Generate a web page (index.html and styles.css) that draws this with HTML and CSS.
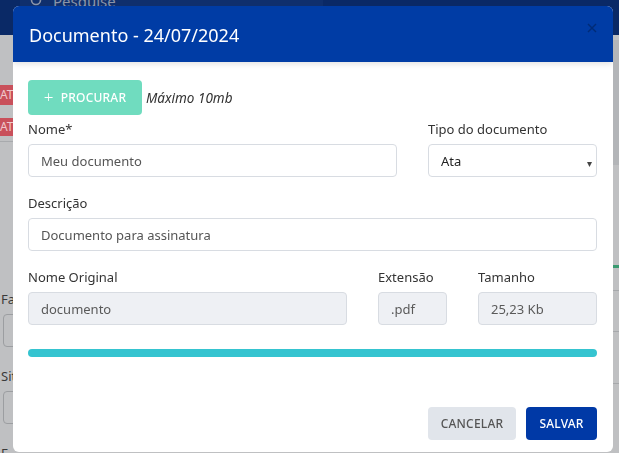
FILE: index.html
```html
<!DOCTYPE html>
<html lang="pt-BR">
<head>
<meta charset="utf-8">
<title>Documento</title>
<link rel="stylesheet" href="styles.css">
</head>
<body>
<div class="page">
  <div class="topbar">
    <div class="search">
      <svg class="search-icon" width="14" height="14" viewBox="0 0 14 14"><circle cx="6" cy="6" r="4.5" fill="none" stroke="#8a94a8" stroke-width="1.6"/></svg>
      <span class="search-text">Pesquise</span>
    </div>
  </div>
  <div class="content">
    <div class="side">
      <div class="badge b1">ATI</div>
      <div class="badge b2">AT</div>
      <div class="sep"></div>
      <div class="bg-label l1">Fa</div>
      <div class="bg-input"></div>
      <div class="bg-label l2">Sit</div>
      <div class="bg-input"></div>
      <div class="bg-label l3">E-</div>
    </div>
    <div class="right-strip">
      <div class="rs-dark"></div>
      <div class="rs-green"></div>
      <div class="rs-line r1"></div>
      <div class="rs-line r2"></div>
      <div class="rs-line r3"></div>
    </div>
  </div>
</div>

<div class="modal">
  <div class="modal-header">
    <h1 class="modal-title">Documento - 24/07/2024</h1>
    <svg class="close" width="10" height="10" viewBox="0 0 10 10"><path d="M1 1L9 9M9 1L1 9" stroke="rgba(0,0,0,0.28)" stroke-width="1.5"/></svg>
  </div>
  <div class="modal-body">
    <div class="upload-row">
      <button class="btn btn-upload"><span class="plus">+</span>PROCURAR</button>
      <span class="max">Máximo 10mb</span>
    </div>
    <div class="row">
      <div class="group g-nome">
        <label class="label">Nome*</label>
        <div class="input">Meu documento</div>
      </div>
      <div class="group g-tipo">
        <label class="label">Tipo do documento</label>
        <div class="input select">Ata<span class="caret">▾</span></div>
      </div>
    </div>
    <div class="row">
      <div class="group g-full">
        <label class="label">Descrição</label>
        <div class="input">Documento para assinatura</div>
      </div>
    </div>
    <div class="row">
      <div class="group g-orig">
        <label class="label">Nome Original</label>
        <div class="input disabled">documento</div>
      </div>
      <div class="group g-ext">
        <label class="label">Extensão</label>
        <div class="input disabled">.pdf</div>
      </div>
      <div class="group g-tam">
        <label class="label">Tamanho</label>
        <div class="input disabled">25,23 Kb</div>
      </div>
    </div>
    <div class="progress"></div>
    <div class="footer">
      <button class="btn btn-cancel">CANCELAR</button>
      <button class="btn btn-save">SALVAR</button>
    </div>
  </div>
</div>
</body>
</html>
```

FILE: styles.css
```css
* { box-sizing: border-box; }
html, body { margin: 0; padding: 0; }
body {
  font-family: "Noto Sans", "Open Sans", sans-serif;
  width: 619px;
  height: 453px;
  overflow: hidden;
  background: #bfc0c2;
}
.page { width: 619px; height: 453px; }
.topbar {
  height: 35px;
  background: #0a2966;
  display: flex;
  align-items: flex-start;
  padding-left: 20px;
}
.search {
  display: flex;
  align-items: flex-start;
  gap: 9px;
  width: 303px;
  height: 26px;
  padding-left: 10px;
  background: #0f2f6d;
}
.search-icon { margin-top: -6px; }
.search-text { color: #8a94a8; font-size: 15px; line-height: 20px; margin-top: -9px; }
.content { display: flex; justify-content: space-between; height: 418px; }
.side { width: 13px; overflow: hidden; padding-top: 50px; }
.badge {
  background: #c9505b;
  color: #f0c8cc;
  font-size: 12px;
  line-height: 20px;
  height: 20px;
  white-space: nowrap;
}
.b2 { margin-top: 13px; height: 18px; line-height: 18px; }
.sep { height: 1px; background: #a8aaad; margin-top: 5px; }
.bg-label { color: #3a3a3a; font-size: 13px; line-height: 18px; padding-left: 1px; white-space: nowrap; }
.l1 { margin-top: 148px; }
.l2 { margin-top: 20px; }
.l3 { margin-top: 20px; }
.bg-input {
  margin-top: 6px;
  margin-left: 3px;
  width: 30px;
  height: 33px;
  border: 1px solid #9c9ea1;
  border-radius: 4px;
}
.right-strip { width: 6px; }
.rs-dark { height: 125px; background: #b3b5b8; margin-top: 5px; }
.rs-green { height: 3px; background: #3a9a70; margin-top: 100px; }
.rs-line { height: 1px; background: #a6a8ab; }
.r1 { margin-top: 22px; }
.r2 { margin-top: 40px; }
.r3 { margin-top: 51px; }

.modal {
  position: fixed;
  left: 13px;
  top: 6px;
  width: 600px;
  height: 446px;
  background: #fff;
  border-radius: 6px;
  overflow: hidden;
  display: flex;
  flex-direction: column;
}
.modal-header {
  height: 56px;
  flex: none;
  background: #003ca5;
  display: flex;
  align-items: center;
  justify-content: space-between;
  padding: 0 16px 0 16px;
  box-shadow: 0 2px 6px rgba(0,0,0,0.12);
  position: relative;
  z-index: 1;
}
.modal-title {
  margin: 0;
  color: #fff;
  font-weight: 400;
  font-size: 18px;
  line-height: 26px;
  margin-top: 1px;
}
.close { margin-top: -12px; }
.modal-body { padding: 18px 16px 0 15px; }
.upload-row { display: flex; align-items: center; gap: 4px; }
.btn {
  font-family: "Noto Sans", "Open Sans", sans-serif;
  border: none;
  border-radius: 4px;
  font-size: 12px;
  font-weight: 500;
  letter-spacing: 0.2px;
  cursor: pointer;
}
.btn-upload {
  width: 114px;
  height: 35px;
  background: #70dcbf;
  color: #fff;
  display: flex;
  align-items: center;
  justify-content: center;
  gap: 7px;
  padding: 0;
}
.plus { font-size: 17px; font-weight: 300; line-height: 1; margin-top: -2px; }
.max { font-style: italic; font-size: 13.5px; color: #333; }
.row { display: flex; gap: 31px; }
.row + .row { margin-top: 16px; }
.upload-row + .row { margin-top: 4px; }
.group { display: flex; flex-direction: column; }
.label {
  font-size: 13px;
  line-height: 20px;
  color: #333;
  margin-bottom: 5px;
}
.input {
  height: 33px;
  border: 1px solid #d8dce2;
  border-radius: 4px;
  padding: 0 12px;
  font-size: 13px;
  color: #555;
  display: flex;
  align-items: center;
  background: #fff;
}
.disabled { background: #eef0f4; color: #5a5a5a; }
.select { justify-content: space-between; color: #222; padding-right: 4px; }
.caret { font-size: 10px; color: #444; margin-top: 4px; }
.g-nome { width: 369px; }
.g-tipo { width: 169px; }
.g-full { width: 569px; }
.g-orig { width: 319px; }
.g-ext { width: 69px; }
.g-tam { width: 119px; }
.progress {
  width: 569px;
  height: 8px;
  border-radius: 4px;
  background: #35c4d0;
  margin-top: 24px;
}
.footer {
  display: flex;
  justify-content: flex-end;
  gap: 10px;
  margin-top: 50px;
  width: 569px;
}
.btn-cancel {
  width: 88px;
  height: 33px;
  background: #e1e5eb;
  color: #555;
}
.btn-save {
  width: 71px;
  height: 33px;
  background: #0039a6;
  color: #fff;
}
```
